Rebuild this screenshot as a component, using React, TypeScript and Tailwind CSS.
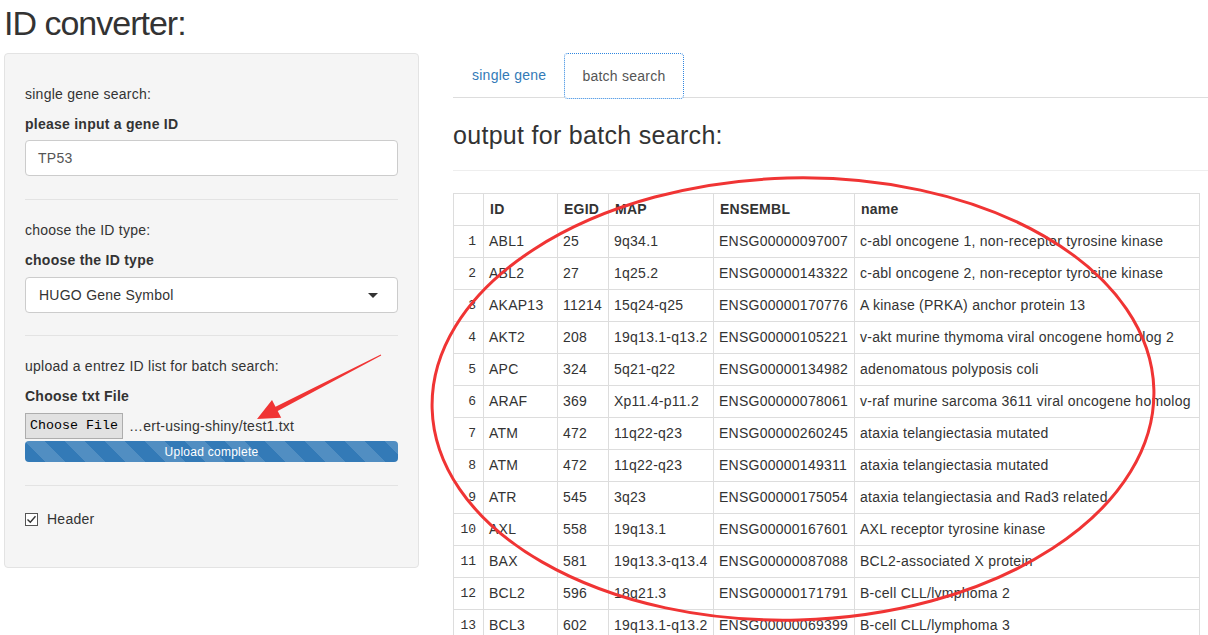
const rows: [string, string, string, string, string][] = [
  ['ABL1', '25', '9q34.1', 'ENSG00000097007', 'c-abl oncogene 1, non-receptor tyrosine kinase'],
  ['ABL2', '27', '1q25.2', 'ENSG00000143322', 'c-abl oncogene 2, non-receptor tyrosine kinase'],
  ['AKAP13', '11214', '15q24-q25', 'ENSG00000170776', 'A kinase (PRKA) anchor protein 13'],
  ['AKT2', '208', '19q13.1-q13.2', 'ENSG00000105221', 'v-akt murine thymoma viral oncogene homolog 2'],
  ['APC', '324', '5q21-q22', 'ENSG00000134982', 'adenomatous polyposis coli'],
  ['ARAF', '369', 'Xp11.4-p11.2', 'ENSG00000078061', 'v-raf murine sarcoma 3611 viral oncogene homolog'],
  ['ATM', '472', '11q22-q23', 'ENSG00000260245', 'ataxia telangiectasia mutated'],
  ['ATM', '472', '11q22-q23', 'ENSG00000149311', 'ataxia telangiectasia mutated'],
  ['ATR', '545', '3q23', 'ENSG00000175054', 'ataxia telangiectasia and Rad3 related'],
  ['AXL', '558', '19q13.1', 'ENSG00000167601', 'AXL receptor tyrosine kinase'],
  ['BAX', '581', '19q13.3-q13.4', 'ENSG00000087088', 'BCL2-associated X protein'],
  ['BCL2', '596', '18q21.3', 'ENSG00000171791', 'B-cell CLL/lymphoma 2'],
  ['BCL3', '602', '19q13.1-q13.2', 'ENSG00000069399', 'B-cell CLL/lymphoma 3'],
];

const Sidebar = () => (
  <aside className="ml-[4px] flex h-[515px] w-[415px] shrink-0 flex-col rounded-[4px] border border-[#e3e3e3] bg-[#f5f5f5] px-[20px] pt-[30px] text-[14px] tracking-[0.25px] text-[#333]">
    <p className="h-[20px] leading-[20px]">single gene search:</p>
    <p className="mt-[10px] h-[20px] font-bold leading-[20px]">please input a gene ID</p>
    <div className="mt-[6px] flex h-[36px] items-center rounded-[4px] border border-[#ccc] bg-white px-[12px] text-[#555]">TP53</div>
    <hr className="mt-[23px] border-[#e3e3e3]" />

    <p className="mt-[20px] h-[20px] leading-[20px]">choose the ID type:</p>
    <p className="mt-[10px] h-[20px] font-bold leading-[20px]">choose the ID type</p>
    <div className="mt-[7px] flex h-[36px] items-center justify-between rounded-[4px] border border-[#ccc] bg-white pl-[13px] pr-[19px]">
      <span>HUGO Gene Symbol</span>
      <span className="h-0 w-0 border-x-[5px] border-t-[5px] border-x-transparent border-t-[#333]" />
    </div>
    <hr className="mt-[22px] border-[#e3e3e3]" />

    <p className="mt-[20px] h-[20px] leading-[20px]">upload a entrez ID list for batch search:</p>
    <p className="mt-[10px] h-[20px] font-bold leading-[20px]">Choose txt File</p>
    <div className="mt-[7px] flex h-[26px] items-center">
      <span className="flex h-[26px] w-[98px] items-center justify-center border border-[#adadad] bg-[#e1e1e1] font-['Liberation_Mono',monospace] text-[13.3px] tracking-normal text-black">
        Choose File
      </span>
      <span className="ml-[6px]">…ert-using-shiny/test1.txt</span>
    </div>
    <div className="mt-[2px] flex h-[21px] items-center justify-center rounded-[4px] bg-[#337ab7] bg-[linear-gradient(45deg,rgba(255,255,255,.15)_25%,transparent_25%,transparent_50%,rgba(255,255,255,.15)_50%,rgba(255,255,255,.15)_75%,transparent_75%,transparent)] bg-[length:40px_40px] text-[12px] text-white">
      Upload complete
    </div>
    <hr className="mt-[23px] border-[#e3e3e3]" />

    <label className="mt-[23px] flex h-[20px] items-center">
      <span className="flex h-[13px] w-[13px] items-center justify-center border border-[#555] bg-white">
        <svg width="11" height="11" viewBox="0 0 11 11" fill="none" stroke="#333" strokeWidth="1.4">
          <path d="M1.5 5.5 L4.3 8.3 L9.5 2.2" />
        </svg>
      </span>
      <span className="ml-[9px]">Header</span>
    </label>
  </aside>
);

const Output = () => (
  <main className="ml-[34px] flex-1 text-[14px] tracking-[0.25px] text-[#333]">
    <nav className="flex h-[45px] items-start border-b border-[#ddd]">
      <a className="flex h-[44px] w-[111px] items-center pl-[19px] text-[#337ab7]">single gene</a>
      <a className="relative flex h-[46px] w-[120px] items-center justify-center rounded-[4px] border border-dotted border-[#2f86e0] bg-white text-[#555]">
        batch search
      </a>
    </nav>

    <h3 className="mt-[24px] h-[26px] text-[25px] leading-[26px] tracking-[0.3px]">output for batch search:</h3>
    <hr className="mt-[22px] border-[#eee]" />

    <table className="mt-[22px] w-[747px] table-fixed border-collapse border border-[#ddd]">
      <colgroup>
        <col className="w-[30px]" />
        <col className="w-[74px]" />
        <col className="w-[51px]" />
        <col className="w-[105px]" />
        <col className="w-[141px]" />
        <col />
      </colgroup>
      <thead>
        <tr className="h-[32px] font-bold">
          <th className="border border-[#ddd]" />
          {['ID', 'EGID', 'MAP', 'ENSEMBL', 'name'].map((h) => (
            <th key={h} className="border border-[#ddd] pl-[6px] text-left">{h}</th>
          ))}
        </tr>
      </thead>
      <tbody>
        {rows.map((r, i) => (
          <tr key={i} className="h-[32px]">
            <td className="border border-[#ddd] pr-[7px] text-right font-['Liberation_Mono',monospace] text-[13px] tracking-normal">{i + 1}</td>
            {r.map((c, j) => (
              <td key={j} className="overflow-visible whitespace-nowrap border border-[#ddd] pl-[5px]">{c}</td>
            ))}
          </tr>
        ))}
      </tbody>
    </table>
  </main>
);

export default function App() {
  return (
    <div className="relative h-[635px] w-[1208px] overflow-hidden bg-white font-['Liberation_Sans',Arial,sans-serif] text-[#333]">
      <h1 className="ml-[4px] mt-[3px] h-[40px] text-[34px] leading-[40px] tracking-[-1px]">ID converter:</h1>
      <div className="mt-[10px] flex">
        <Sidebar />
        <Output />
      </div>

      {/* red annotation marks drawn over the page */}
      <svg className="pointer-events-none absolute left-0 top-0" width="1208" height="635">
        <ellipse cx="793" cy="399" rx="361" ry="221" fill="none" stroke="#f03434" strokeWidth="3" transform="rotate(-1.5 793 399)" />
        <polygon
          points="380.8,354.5 275.5,406.7 272,400 257,419 281.2,417.8 277.7,411.1 381.2,355.5"
          fill="#f03434"
        />
      </svg>
    </div>
  );
}
